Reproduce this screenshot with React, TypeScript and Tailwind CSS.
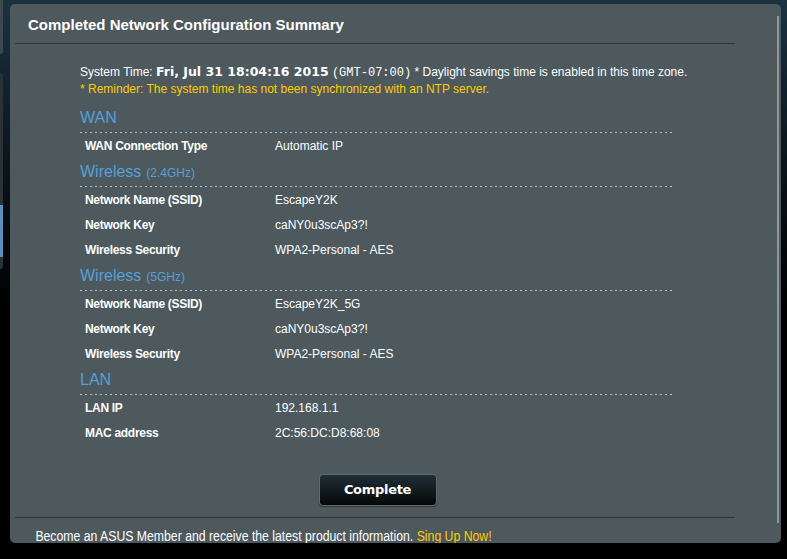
import React from "react";

type Row = { label: string; value: string };
type Section = { title: string; sub?: string; rows: Row[] };

const sections: Section[] = [
  { title: "WAN", rows: [{ label: "WAN Connection Type", value: "Automatic IP" }] },
  {
    title: "Wireless",
    sub: "(2.4GHz)",
    rows: [
      { label: "Network Name (SSID)", value: "EscapeY2K" },
      { label: "Network Key", value: "caNY0u3scAp3?!" },
      { label: "Wireless Security", value: "WPA2-Personal - AES" },
    ],
  },
  {
    title: "Wireless",
    sub: "(5GHz)",
    rows: [
      { label: "Network Name (SSID)", value: "EscapeY2K_5G" },
      { label: "Network Key", value: "caNY0u3scAp3?!" },
      { label: "Wireless Security", value: "WPA2-Personal - AES" },
    ],
  },
  {
    title: "LAN",
    rows: [
      { label: "LAN IP", value: "192.168.1.1" },
      { label: "MAC address", value: "2C:56:DC:D8:68:08" },
    ],
  },
];

const arial = "font-['Liberation_Sans',Arial,sans-serif]";

export default function App() {
  return (
    <div className="w-[787px] h-[559px] overflow-hidden flex pt-[4px] bg-[linear-gradient(to_bottom,#1b3241_0%,#0a141a_30%,#000_55%)]">
      {/* leftover nav edges */}
      <div className="w-[10px] flex flex-col">
        <div className="h-[54px] w-[3px] -mt-[4px] rounded-br-[3px] bg-[#3e484c]" />
        <div className="mt-[19px] h-[196px] w-[3px] rounded-r-[3px] bg-[#2a3236] flex flex-col justify-end pb-[12px]">
          <div className="h-[52px] bg-[#5d8fb8]" />
        </div>
      </div>

      <div className={`relative w-[771px] h-[539px] rounded-[5px] bg-[#4d595d] overflow-hidden ${arial}`}>
        <div className="pl-[18px] pt-[12px] h-[35px] text-[15px] leading-[18px] font-bold text-white">
          Completed Network Configuration Summary
        </div>
        <div className="ml-[5px] w-[720px] h-px bg-[#2c3639] mt-[4px]" />

        <div className="ml-[70px] w-[595px] mt-[20px]">
          <div className="text-[12px] leading-[16px] text-white whitespace-nowrap">
            System Time:{" "}
            <span className="font-['DejaVu_Sans',sans-serif] font-bold text-[12.5px]">
              Fri, Jul 31 18:04:16 2015
            </span>{" "}
            <span className="font-['Liberation_Mono',monospace] text-[12px]">(GMT-07:00)</span> * Daylight savings
            time is enabled in this time zone.
          </div>
          <div className="text-[12px] leading-[16px] text-[#ffcc00] mb-[11px]">
            * Reminder: The system time has not been synchronized with an NTP server.
          </div>

          {sections.map((s, i) => (
            <div key={i} className="mt-[4px]">
              <div className="h-[20px] leading-[20px] text-[16px] text-[#55a0d6] whitespace-nowrap">
                {s.title}
                {s.sub && <span className="ml-[5px] text-[12px]">{s.sub}</span>}
              </div>
              <div className="mt-[4px] h-px bg-[repeating-linear-gradient(to_right,#b4bcbf_0_2px,transparent_2px_5px)]" />
              {s.rows.map((r) => (
                <div key={r.label} className="h-[25px] flex items-center text-white">
                  <div className="w-[195px] pl-[5px] text-[12px] tracking-[-0.3px] font-bold">{r.label}</div>
                  <div className="text-[12px]">{r.value}</div>
                </div>
              ))}
            </div>
          ))}

          <div className="flex justify-center mt-[29px]">
            <button className="w-[118px] h-[32px] rounded-[4px] border border-[#5f6b6f] bg-[linear-gradient(to_bottom,#1f2f35,#050809)] shadow-[0_1px_1px_rgba(0,0,0,0.4)] text-white text-[13px] font-bold font-['DejaVu_Sans',sans-serif] tracking-[-0.3px]">
              Complete
            </button>
          </div>
        </div>

        <div className="ml-[5px] w-[720px] h-px bg-[#2c3639] mt-[11px]" />
        <div className="pl-[29px] mt-[12px] text-[14px] leading-[12px] text-white whitespace-nowrap origin-left scale-x-[0.875]">
          Become an ASUS Member and receive the latest product information.{" "}
          <span className="text-[#ffcc00]">Sing Up Now!</span>
        </div>

        {/* scrollbar */}
        <div className="absolute left-[767px] top-[12px] bottom-[20px] w-[2px] bg-[#8e979a]" />
      </div>
    </div>
  );
}
